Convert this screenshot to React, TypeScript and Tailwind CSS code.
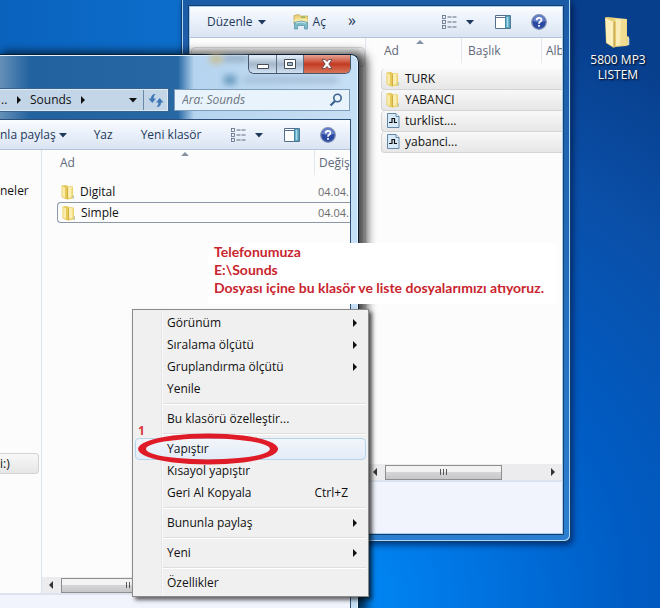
import React from 'react';
import { clsx } from 'clsx';

type IconProps = { className?: string };

const Triangle: React.FC<IconProps & { dir?: 'down' | 'left' | 'right' }> = ({ dir = 'down', className }) => {
  const paths = {
    down: 'M1 3h8L5 7.500z',
    left: 'M7 1v8L3 5z',
    right: 'M3 1v8l4-4z',
  };
  return (
    <svg className={clsx('w-[10px] h-[10px] shrink-0', className)} viewBox="0 0 10 10" fill="currentColor" aria-hidden="true">
      <path d={paths[dir]} />
    </svg>
  );
};

const FolderIcon: React.FC<IconProps> = ({ className }) => (
  <svg className={clsx('shrink-0', className)} viewBox="0 0 16 16" aria-hidden="true">
    <path d="M7 2l6 .5v8.500l1 .5v3L7.500 15.500z" fill="#ecd36e" />
    <path d="M8 3h3.500v10L8 14z" fill="#faeeb0" />
    <path d="M1.500 1.500L6.500 1l1.500 2v12.500l-3-.5-3.500-2z" fill="#e7c95a" />
    <path d="M2.200 2.200l2.800 1.300v10.500l-2.800-1.500z" fill="#f9eca8" />
    <path d="M7.500 3.500v11.500" stroke="#c9a63e" strokeWidth=".8" />
    <path d="M13.200 11.500v3" stroke="#9cc3d8" strokeWidth="1" />
  </svg>
);

const DesktopFolder = () => (
  <svg className="w-8 h-8" viewBox="0 0 32 32" aria-hidden="true">
    <path d="M5 1l20 2v17l2 1v8l-3 1-11 1z" fill="#ecd684" />
    <path d="M12 5l3-2 9 1v24l-11 2z" fill="#f9ecb6" />
    <path d="M19 4l5 .5V28l-6 1z" fill="#f1dd92" />
    <path d="M3 1.500l2-.5 9 4v24l-2 3-8-5z" fill="#e7ca69" />
    <path d="M3.500 2L12 6v25.500l-7.500-5z" fill="#faefbd" />
    <path d="M12 6v25.500" stroke="#b5943c" strokeWidth="1" />
    <path d="M26.500 22v7" stroke="#cfe0d0" strokeWidth="1.500" />
  </svg>
);

const OpenIcon = () => (
  <svg className="w-4 h-4" viewBox="0 0 16 16" aria-hidden="true">
    <path d="M1 1.500L6 .5l1 1.500h7.500v8H1z" fill="#ecd377" stroke="#b9a052" strokeWidth=".7" />
    <path d="M1.500 4.500h13v5h-13z" fill="#f8e9a5" />
    <path d="M8 3.200h4" stroke="#6bae5c" />
    <path d="M1.500 8.500q6.500-3 13 0v6.500h-3v-3.500h-7V15h-3z" fill="#7dbbc9" stroke="#518da5" strokeWidth=".7" />
    <path d="M3 9q5-2 10 0" stroke="#c9e7e8" fill="none" />
  </svg>
);

const PlaylistIcon = () => (
  <svg className="w-4 h-4 shrink-0" viewBox="0 0 16 16" aria-hidden="true">
    <path d="M2.500.5h8.500l3 3v11h-11.500z" fill="#d8e9f7" stroke="#6286a8" />
    <path d="M11 .5v3h3" fill="#fff" stroke="#6286a8" />
    <path d="M4 9.500h3V5.500h2.500v4H12" fill="none" stroke="#111" strokeWidth="1.200" />
  </svg>
);

const ViewIcon = () => (
  <svg className="w-4 h-4" viewBox="0 0 16 16" aria-hidden="true">
    {[2, 7, 12].map((y) => (
      <g key={y} fill="none" stroke="#5c6b80">
        <rect x="1.500" y={y - 0.5} width="3" height="3" strokeWidth=".8" />
        <path d={`M6.500 ${y + 1}h4M11.500 ${y + 1}h4`} />
      </g>
    ))}
  </svg>
);

const PaneIcon = () => (
  <svg className="w-4 h-4" viewBox="0 0 16 16" aria-hidden="true">
    <path d="M.5 1.500h15v13H.5z" fill="#fff" stroke="#56708c" />
    <path d="M.5 3.500h10" stroke="#56708c" />
    <path d="M10.500 2h4.500v12h-4.500z" fill="#6eb6cf" stroke="#4688a4" />
    <path d="M12.500 3v10" stroke="#abdce8" />
  </svg>
);

const HelpIcon = () => (
  <svg className="w-4 h-4" viewBox="0 0 16 16" aria-hidden="true">
    <circle cx="8" cy="8" r="7.300" fill="#2b49a2" stroke="#8293b5" strokeWidth="1.300" />
    <path d="M2 7a6 6 0 0 1 12 0q-6 2-12 0z" fill="#6781c9" />
    <path d="M5.700 6.200q0-2.400 2.400-2.400t2.300 2.100q0 1.100-1.300 1.900Q8 8.500 8 9.700M8 11v1.700" fill="none" stroke="#fff" strokeWidth="1.800" />
  </svg>
);

const RefreshIcon = () => (
  <svg className="w-4 h-4" viewBox="0 0 16 16" aria-hidden="true" fill="#3f77b5">
    <path d="M7.500 2Q3 2 3 6.500H.5L4.300 11 8 6.500H5.500Q5.500 4 7.500 2z" />
    <path d="M8.500 15q4.500 0 4.500-4.500h2.500L11.700 6 8 10.500h2.500q0 2.500-2 4.500z" />
  </svg>
);

const SearchIcon = () => (
  <svg className="w-[14px] h-[14px]" viewBox="0 0 14 14" aria-hidden="true" fill="none" stroke="#3d6391">
    <circle cx="8.500" cy="5" r="3.700" strokeWidth="1.600" />
    <path d="M6 8l-4.500 4.500" strokeWidth="2.300" />
  </svg>
);

const ToolbarIcons = () => (
  <>
    <button aria-label="Görünüm"><ViewIcon /></button>
    <button className="ml-2" aria-label="Diğer seçenekler"><Triangle /></button>
    <button className="ml-5" aria-label="Önizleme bölmesi"><PaneIcon /></button>
    <button className="ml-5" aria-label="Yardım"><HelpIcon /></button>
  </>
);

const Scrollbar: React.FC<{ thumb: string }> = ({ thumb }) => (
  <div className="flex items-center h-4 px-1 gap-[5px] bg-[#ececee] text-[#333]">
    <Triangle dir="left" />
    <div className={clsx('flex items-center justify-center gap-[2px] h-[15px] border border-[#8e8e8e] bg-linear-to-b from-[#f3f3f3] from-45% via-[#d5d5d8] via-50% to-[#c7c7ca]', thumb)}>
      <i className="w-px h-[6px] bg-[#555]" />
      <i className="w-px h-[6px] bg-[#555]" />
      <i className="w-px h-[6px] bg-[#555]" />
    </div>
    <Triangle dir="right" className="ml-auto" />
  </div>
);

const SortMark = () => (
  <svg className="absolute top-[2px] left-1/2 -ml-[5px] w-2 h-1" viewBox="0 0 8 4" aria-hidden="true">
    <path d="M0 4l4-4 4 4z" fill="#8594a3" />
  </svg>
);

const backFiles = [
  { name: 'TURK', folder: true },
  { name: 'YABANCI', folder: true },
  { name: 'turklist....', folder: false },
  { name: 'yabanci...', folder: false },
];

const frontFiles = [
  { name: 'Digital', date: '04.04.', focused: false },
  { name: 'Simple', date: '04.04.', focused: true },
];

const toolbarClass = 'flex items-center shrink-0 border-b border-[#b4c3d6] bg-linear-to-b from-[#fafcff] via-[#e9f0fa] to-[#dae4f2] text-[#1e395b]';

const BackWindow = () => (
  <section className="absolute left-[181px] top-0 w-[390px] h-[542px] flex flex-col pt-[6px] px-[7px] pb-[7px] rounded-b-md border border-t-0 border-[#143c6b] bg-linear-to-b from-[#1c5ba6] to-[#2c7fd0] shadow-[inset_-1px_-1px_0_#a8d8f8,inset_1px_0_0_#a8d8f8,2px_3px_6px_rgba(0,10,50,.6)]">
    <div className="flex-1 min-h-0 flex flex-col border border-[#a6cdee] outline outline-[#16416f] bg-[#fcfcfc]">
      <div className={clsx(toolbarClass, 'h-[31px] pl-[17px] pr-[15px]')}>
        <button className="flex items-center gap-1">Düzenle <Triangle /></button>
        <button className="flex items-center gap-1 ml-[26px]"><OpenIcon /> Aç</button>
        <button className="ml-[22px] text-base leading-4 pb-1">»</button>
        <div className="flex items-center ml-auto"><ToolbarIcons /></div>
      </div>
      <div className="flex-1 min-h-0 flex">
        <nav className="w-[176px] shrink-0 border-r border-[#dfe5ee] pt-[9px] pl-px">
          <div className="h-5 border border-[#d9d9d9] rounded-sm bg-[#f5f5f5]" />
        </nav>
        <div className="flex-1 min-w-0 flex flex-col">
          <div className="flex-1 overflow-hidden pl-[15px]">
            <table className="w-full table-fixed border-separate border-spacing-0">
              <thead>
                <tr className="h-[25px] text-left text-[#60697a]">
                  <th className="relative w-20 font-normal pl-[3px]">Ad<SortMark /></th>
                  <th className="w-20 font-normal pl-[6px] border-l border-[#e3e8ee]">Başlık</th>
                  <th className="p-0 pl-1 font-normal border-l border-[#e3e8ee] whitespace-nowrap">Alb</th>
                </tr>
                <tr className="h-[6px]" />
              </thead>
              <tbody>
                {backFiles.map((file) => (
                  <tr key={file.name} className="h-[21px] bg-linear-to-b from-[#f8f8f8] to-[#e6e6e6]">
                    <td colSpan={3} className="p-0 border-l border-b border-[#d4d4d4] rounded-l-sm">
                      <div className="flex items-center gap-1 pl-[3px]">
                        {file.folder ? <FolderIcon className="w-4 h-4" /> : <PlaylistIcon />}
                        {file.name}
                      </div>
                    </td>
                  </tr>
                ))}
              </tbody>
            </table>
          </div>
          <Scrollbar thumb="w-[117px]" />
        </div>
      </div>
      <div className="h-[53px] shrink-0 border-t-2 border-[#dde3ee] bg-[#f1f4fc]" />
    </div>
  </section>
);

const captionClass = 'flex items-center justify-center border-r border-[#5c6d81] bg-linear-to-b from-[#dce8f4] from-10% via-[#a5b7cb] via-50% to-[#cfe1f1]';

const FrontWindow = () => (
  <section className="absolute left-0 top-[54px] bottom-0 w-[359px] flex flex-col rounded-tr-lg border-t border-r border-[#0d1e33] bg-[linear-gradient(90deg,#6590b8_0,#22629f_30px,#2667a4_178px,#b5d4ef_194px,#c6def4_340px,#c4e0f7_100%)] shadow-[inset_-1px_1px_0_#e2f3ff,5px_1px_10px_3px_rgba(0,0,0,.7)]">
    <svg className="absolute left-[190px] top-0 w-[160px] h-[60px] blur-[3px]" viewBox="0 0 160 60" aria-hidden="true">
      <path d="M20 0h12v8H20z" fill="#c9bd8f" />
      <path d="M34 1h24v5H34z" fill="#8fa4b9" />
      <path d="M34 20h12v10H34z" fill="#6c9dc0" />
      <path d="M54 22h94v6H54z" fill="#a3bdd6" />
    </svg>
    <div className="relative flex justify-end h-[19px] pr-[7px]">
      <div className="flex border border-t-0 border-[#44566c] rounded-b-md overflow-hidden">
        <button className={clsx(captionClass, 'w-7')} aria-label="Simge durumuna küçült">
          <svg className="w-3 h-3" viewBox="0 0 12 12" aria-hidden="true"><path d="M.5 6.500h11v4H.5z" fill="#fff" stroke="#454d59" /></svg>
        </button>
        <button className={clsx(captionClass, 'w-[27px]')} aria-label="Ekranı kapla">
          <svg className="w-3 h-3" viewBox="0 0 12 12" aria-hidden="true"><path fillRule="evenodd" d="M.5 1.500h11v9H.5zM3.500 4.500v3h5v-3z" fill="#fff" stroke="#454d59" /></svg>
        </button>
        <button className="flex items-center justify-center w-[46px] bg-linear-to-b from-[#e5a294] via-[#c23a22] to-[#d77457]" aria-label="Kapat">
          <svg className="w-3 h-3" viewBox="0 0 12 12" aria-hidden="true"><path d="M1 1.500h3.200L6 3.600l1.800-2.100H11L7.800 6l3.200 4.500H7.800L6 8.400l-1.800 2.100H1L4.200 6z" fill="#fff" stroke="#574149" strokeWidth=".8" /></svg>
        </button>
      </div>
    </div>
    <div className="relative flex gap-[6px] mt-[15px] mb-2 pr-2 h-[22px]">
      <div className="flex items-center w-[168px] border border-l-0 border-[#dceaf6] bg-[#c3d6e8] outline outline-[#39648f]">
        <span className="w-[14px] pl-px">..</span>
        <Triangle dir="right" />
        <button className="ml-[6px]">Sounds</button>
        <Triangle dir="right" className="ml-[6px]" />
        <button className="ml-auto mr-[5px]" aria-label="Önceki konumlar"><Triangle /></button>
        <button className="flex items-center justify-center w-6 h-full border-l border-[#6a89a8]" aria-label="Yenile"><RefreshIcon /></button>
      </div>
      <label className="flex-1 min-w-0 flex items-center px-[6px] border border-[#7f9db9] bg-[#e9f3fc]">
        <input className="flex-1 min-w-0 pl-px italic placeholder:text-[#6d7681] outline-none" placeholder="Ara: Sounds" aria-label="Ara" />
        <SearchIcon />
      </label>
    </div>
    <div className="flex-1 min-h-0 flex flex-col mr-[7px] border-t border-r border-[#2e5078] bg-[#fcfcfc]">
      <div className={clsx(toolbarClass, 'h-[30px] pr-[14px]')}>
        <button className="flex items-center gap-[2px]">nla paylaş <Triangle /></button>
        <button className="ml-[26px]">Yaz</button>
        <button className="ml-[28px]">Yeni klasör</button>
        <div className="flex items-center ml-auto"><ToolbarIcons /></div>
      </div>
      <div className="flex-1 min-h-0 flex">
        <nav className="flex flex-col w-[42px] shrink-0 border-r border-[#d9e2ee] pt-[31px]">
          <a href="#kutuphaneler" className="h-[21px] leading-5">neler</a>
          <a href="#surucu" className="flex items-center h-[21px] mt-auto mb-[119px] mr-[2px] rounded-r-sm border border-l-0 border-[#d3d3d3] bg-linear-to-b from-[#f8f8f8] to-[#e6e6e6]">
            i:)
          </a>
        </nav>
        <div className="flex-1 min-w-0 flex flex-col overflow-hidden">
          <div className="flex-1 overflow-hidden pl-[15px]">
            <table className="w-full table-fixed border-separate border-spacing-0">
              <thead>
                <tr className="h-[25px] text-left text-[#60697a]">
                  <th className="relative font-normal pl-[3px]">Ad<SortMark /></th>
                  <th className="w-9 p-0 pl-1 font-normal border-l border-[#e3e8ee] whitespace-nowrap">Değiş</th>
                </tr>
                <tr className="h-[6px]" />
              </thead>
              <tbody>
                {frontFiles.map((file) => (
                  <tr key={file.name} className="h-[21px]">
                    <td className={clsx('p-0', file.focused && 'border border-r-0 border-[#8b98a8] rounded-l-sm')}>
                      <div className="flex items-center gap-1 pl-[3px]">
                        <FolderIcon className="w-4 h-4" />
                        {file.name}
                      </div>
                    </td>
                    <td className={clsx('p-0 pl-1 text-[11px] text-[#6d6d6d] whitespace-nowrap', file.focused && 'border-y border-[#8b98a8]')}>
                      {file.date}
                    </td>
                  </tr>
                ))}
              </tbody>
            </table>
          </div>
          <Scrollbar thumb="w-[136px]" />
        </div>
      </div>
      <div className="h-[15px] shrink-0 border-t-2 border-[#dde3ee] bg-[#f1f4fc]" />
    </div>
  </section>
);

type MenuItem = { label: string; submenu?: boolean; shortcut?: string; active?: boolean };

const menuGroups: MenuItem[][] = [
  [
    { label: 'Görünüm', submenu: true },
    { label: 'Sıralama ölçütü', submenu: true },
    { label: 'Gruplandırma ölçütü', submenu: true },
    { label: 'Yenile' },
  ],
  [{ label: 'Bu klasörü özelleştir...' }],
  [
    { label: 'Yapıştır', active: true },
    { label: 'Kısayol yapıştır' },
    { label: 'Geri Al Kopyala', shortcut: 'Ctrl+Z' },
  ],
  [{ label: 'Bununla paylaş', submenu: true }],
  [{ label: 'Yeni', submenu: true }],
  [{ label: 'Özellikler' }],
];

const ContextMenu = () => (
  <div role="menu" className="absolute left-[132px] top-[309px] w-[237px] p-[2px] border border-[#8a8a8a] bg-[linear-gradient(90deg,#f0f0f0_28px,#e6e7ea_28px,#e6e7ea_29px,#f8f8f8_29px,#f8f8f8_30px,#f0f0f0_30px)] shadow-[3px_3px_4px_rgba(0,0,0,.6)]">
    {menuGroups.map((group, groupIndex) => (
      <React.Fragment key={groupIndex}>
        {groupIndex > 0 && <div role="separator" className="h-[2px] my-[3px] ml-7 border-t border-[#dedede] bg-white" />}
        {group.map((item) => (
          <button
            key={item.label}
            role="menuitem"
            className={clsx(
              'flex items-center w-full h-[22px] pl-[31px] pr-[5px] border rounded-sm text-left',
              item.active ? 'border-[#b5d5ec] bg-linear-to-b from-[#f2f5fa] to-[#e3ecf7]' : 'border-transparent'
            )}
          >
            {item.label}
            {item.shortcut && <span className="ml-auto mr-3">{item.shortcut}</span>}
            {item.submenu && <Triangle dir="right" className="ml-auto" />}
          </button>
        ))}
      </React.Fragment>
    ))}
  </div>
);

const App: React.FC = () => {
  return (
    <main className="relative w-full min-h-screen overflow-hidden bg-[radial-gradient(circle_at_330px_600px,#008cf8_0,#0078e6_120px,#005cc4_300px,#0a4fa8_480px,#083f8d_620px)] font-['Open_Sans','Noto_Sans',sans-serif] text-xs leading-4 text-[#111]">
      <div className="absolute left-0 top-0 w-[181px] h-[54px] bg-linear-to-r from-[#0a62bd] to-[#0d6ecb]" />

      <a href="#listem" className="absolute left-[582px] top-4 w-18 flex flex-col items-center text-center text-white leading-[15px] [text-shadow:1px_1px_2px_#000]">
        <DesktopFolder />
        <span className="mt-1">5800 MP3 LISTEM</span>
      </a>

      <BackWindow />
      <FrontWindow />

      {/* Step note */}
      <p className="absolute left-[208px] top-[243px] w-[348px] pl-[6px] pb-[7px] bg-white text-[#c9252f] font-['Lato','Open_Sans',sans-serif] text-sm font-bold leading-[18px] whitespace-nowrap">
        Telefonumuza<br />
        E:\Sounds<br />
        Dosyası içine bu klasör ve liste dosyalarımızı atıyoruz.
      </p>

      <ContextMenu />

      <span className="absolute left-[138px] top-[423px] font-bold text-[#d8343c]">1</span>
      <svg className="absolute left-[138px] top-[433px] w-[140px] h-8 pointer-events-none" viewBox="0 0 140 32" aria-hidden="true">
        <path fillRule="evenodd" fill="#e01b28" d="M70 0.500a70 15.500 0 1 0 .1 0zM70 5.500a62 10.500 0 1 1-.1 0z" />
      </svg>
    </main>
  );
};

export default App;
